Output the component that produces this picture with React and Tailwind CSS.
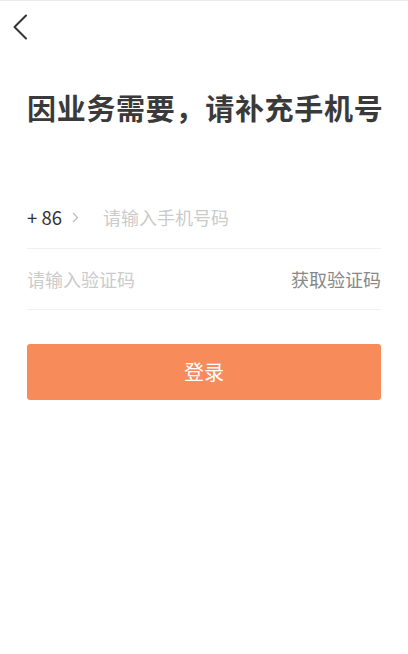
import { useState } from 'react';

const BackIcon = () => (
    <svg width="16" height="26" viewBox="0 0 16 26" fill="none">
        <path d="M14 1.5L2.5 13L14 24.5" stroke="#333" strokeWidth="2" strokeLinecap="round" strokeLinejoin="round" />
    </svg>
);

export default function App() {
    const [phone, setPhone] = useState('');
    const [code, setCode] = useState('');

    return (
        <div
            className="min-h-[654px] w-full bg-white border-t border-[#ececec]"
            style={{ fontFamily: '"Noto Sans CJK SC", "Noto Sans", sans-serif' }}
        >
            {/* header */}
            <div className="h-[52px] flex items-center pl-[12px]">
                <button className="p-0 flex items-center">
                    <BackIcon />
                </button>
            </div>

            <div className="px-[27px]">
                <h1 className="mt-[37px] text-[29px] leading-[34px] tracking-[0.7px] font-bold text-[#3a3a3a] whitespace-nowrap">
                    因业务需要，请补充手机号
                </h1>

                <div className="mt-[63px]">
                    <div className="h-[62px] flex items-center border-b border-[#f0f0f0]">
                        <span className="text-[18.5px] text-[#333] whitespace-nowrap">+ 86</span>
                        <svg className="ml-[10px]" width="7" height="11" viewBox="0 0 7 11" fill="none">
                            <path d="M1 1l4.5 4.5L1 10" stroke="#bbb" strokeWidth="1.2" />
                        </svg>
                        <input
                            value={phone}
                            onChange={e => setPhone(e.target.value)}
                            placeholder="请输入手机号码"
                            className="ml-[24px] flex-1 min-w-0 outline-none text-[18px] text-[#333] placeholder:text-[#cbcbcb]"
                        />
                    </div>
                    <div className="h-[61px] flex items-center border-b border-[#f0f0f0]">
                        <input
                            value={code}
                            onChange={e => setCode(e.target.value)}
                            placeholder="请输入验证码"
                            className="flex-1 min-w-0 outline-none text-[18px] text-[#333] placeholder:text-[#cbcbcb]"
                        />
                        <span className="text-[18px] text-[#888] whitespace-nowrap">获取验证码</span>
                    </div>
                </div>

                <button className="mt-[34px] w-full h-[56px] rounded-[3px] bg-[#f78c5a] text-white text-[20px] flex items-center justify-center">
                    登录
                </button>
            </div>
        </div>
    );
}
